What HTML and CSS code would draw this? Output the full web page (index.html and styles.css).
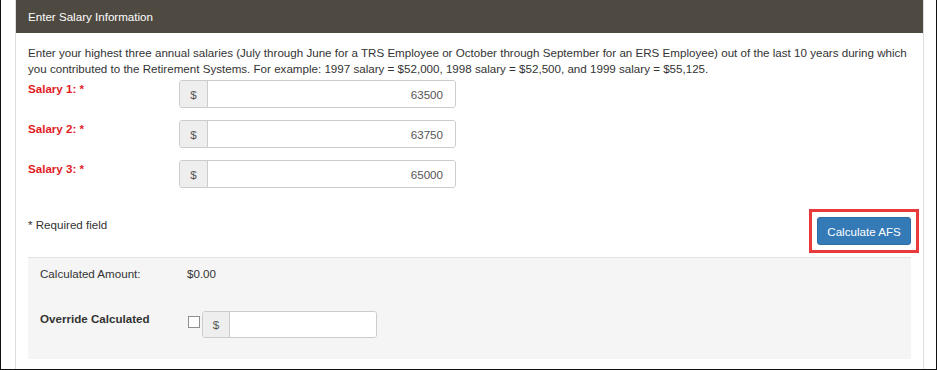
FILE: index.html
```html
<!DOCTYPE html>
<html lang="en">
<head>
    <meta charset="UTF-8">
    <meta name="viewport" content="width=device-width, initial-scale=1.0">
    <title>Enter Salary Information</title>
    <link rel="stylesheet" href="styles.css">
</head>
<body>
    <div class="frame">
        <div class="panel">
            <div class="panel-heading">Enter Salary Information</div>

            <div class="panel-body">
                <p class="intro">Enter your highest three annual salaries (July through June for a TRS Employee or October through September for an ERS Employee) out of the last 10 years during which you contributed to the Retirement Systems. For example: 1997 salary = $52,000, 1998 salary = $52,500, and 1999 salary = $55,125.</p>

                <div class="form-row">
                    <label class="req-label" for="salary1">Salary 1: *</label>
                    <div class="input-group">
                        <span class="addon">$</span>
                        <input type="text" id="salary1" value="63500">
                    </div>
                </div>

                <div class="form-row">
                    <label class="req-label" for="salary2">Salary 2: *</label>
                    <div class="input-group">
                        <span class="addon">$</span>
                        <input type="text" id="salary2" value="63750">
                    </div>
                </div>

                <div class="form-row">
                    <label class="req-label" for="salary3">Salary 3: *</label>
                    <div class="input-group">
                        <span class="addon">$</span>
                        <input type="text" id="salary3" value="65000">
                    </div>
                </div>

                <div class="actions">
                    <span class="note">* Required field</span>
                    <button class="btn-calc" onclick="calculateAfs()">Calculate AFS</button>
                </div>

                <div class="well">
                    <div class="well-row">
                        <span class="well-label">Calculated Amount:</span>
                        <span id="calcAmount">$0.00</span>
                    </div>
                    <div class="well-row override">
                        <label class="well-label bold" for="overrideAmt">Override Calculated</label>
                        <div class="override-controls">
                            <input type="checkbox" id="overrideCheck">
                            <div class="input-group small">
                                <span class="addon">$</span>
                                <input type="text" id="overrideAmt">
                            </div>
                        </div>
                    </div>
                </div>
            </div>
        </div>
    </div>

    <script>
        function calculateAfs() {
            const ids = ['salary1', 'salary2', 'salary3'];
            let total = 0;
            ids.forEach(id => {
                total += parseFloat(document.getElementById(id).value) || 0;
            });
            const avg = total / ids.length;
            document.getElementById('calcAmount').textContent = '$' + avg.toFixed(2);
        }
    </script>
</body>
</html>
```

FILE: styles.css
```css
* {
    box-sizing: border-box;
    margin: 0;
    padding: 0;
}

body {
    font-family: "Liberation Sans", Arial, sans-serif;
    font-size: 11.6px;
    color: #333;
    background-color: white;
}

.frame {
    height: 370px;
    padding: 0 12px 0 14px;
    border-left: 1px solid #111;
    border-right: 1px solid #111;
    border-bottom: 1px solid #111;
    overflow: hidden;
}

.panel {
    height: 100%;
    border-left: 1px solid #ddd;
    border-right: 1px solid #ddd;
}

.panel-heading {
    height: 33px;
    line-height: 33px;
    padding-left: 12px;
    background-color: #4e4a41;
    color: white;
}

.panel-body {
    padding: 12px 12px 0 12px;
}

.intro {
    line-height: 16px;
    margin-bottom: 3px;
}

.form-row {
    display: grid;
    grid-template-columns: 151px 277px;
    align-items: start;
    margin-bottom: 12px;
}

.req-label {
    color: #e31b23;
    font-weight: bold;
    padding-top: 2px;
}

.input-group {
    display: flex;
    height: 28px;
    border: 1px solid #ccc;
    border-radius: 3px;
    overflow: hidden;
    background-color: white;
}

.addon {
    width: 28px;
    display: flex;
    align-items: center;
    justify-content: center;
    background-color: #eee;
    border-right: 1px solid #ccc;
    color: #555;
}

.input-group input {
    flex: 1;
    min-width: 0;
    border: none;
    font-family: inherit;
    font-size: 11.6px;
    color: #555;
    text-align: right;
    padding: 0 12px;
    outline: none;
}

.actions {
    display: flex;
    justify-content: space-between;
    align-items: flex-start;
    margin-top: 29px;
}

.note {
    padding-top: 1px;
}

.btn-calc {
    position: relative;
    width: 94px;
    height: 28px;
    background-color: #337ab7;
    color: white;
    border: 1px solid #2e6da4;
    border-radius: 3px;
    font-family: inherit;
    font-size: 11.6px;
    cursor: pointer;
}

/* red highlight box drawn over the screenshot */
.btn-calc::after {
    content: "";
    position: absolute;
    top: -9px;
    left: -9px;
    right: -9px;
    bottom: -9px;
    border: 3px solid #e8393c;
}

.well {
    margin-top: 12px;
    height: 102px;
    padding: 9px 12px 0 12px;
    background-color: #f5f5f5;
    border-top: 1px solid #e3e3e3;
}

.well-row {
    display: grid;
    grid-template-columns: 147px auto;
    align-items: start;
}

.well-label.bold {
    font-weight: bold;
    padding-top: 1px;
}

.override {
    margin-top: 31px;
}

.override-controls {
    display: flex;
    align-items: flex-start;
    gap: 2px;
}

.override-controls input[type="checkbox"] {
    appearance: none;
    width: 12px;
    height: 12px;
    margin: 5px 0 0 1px;
    border: 1px solid #8f8f8f;
    background-color: white;
}

.input-group.small {
    width: 175px;
    height: 27px;
}

.input-group.small .addon {
    width: 27px;
}
```
